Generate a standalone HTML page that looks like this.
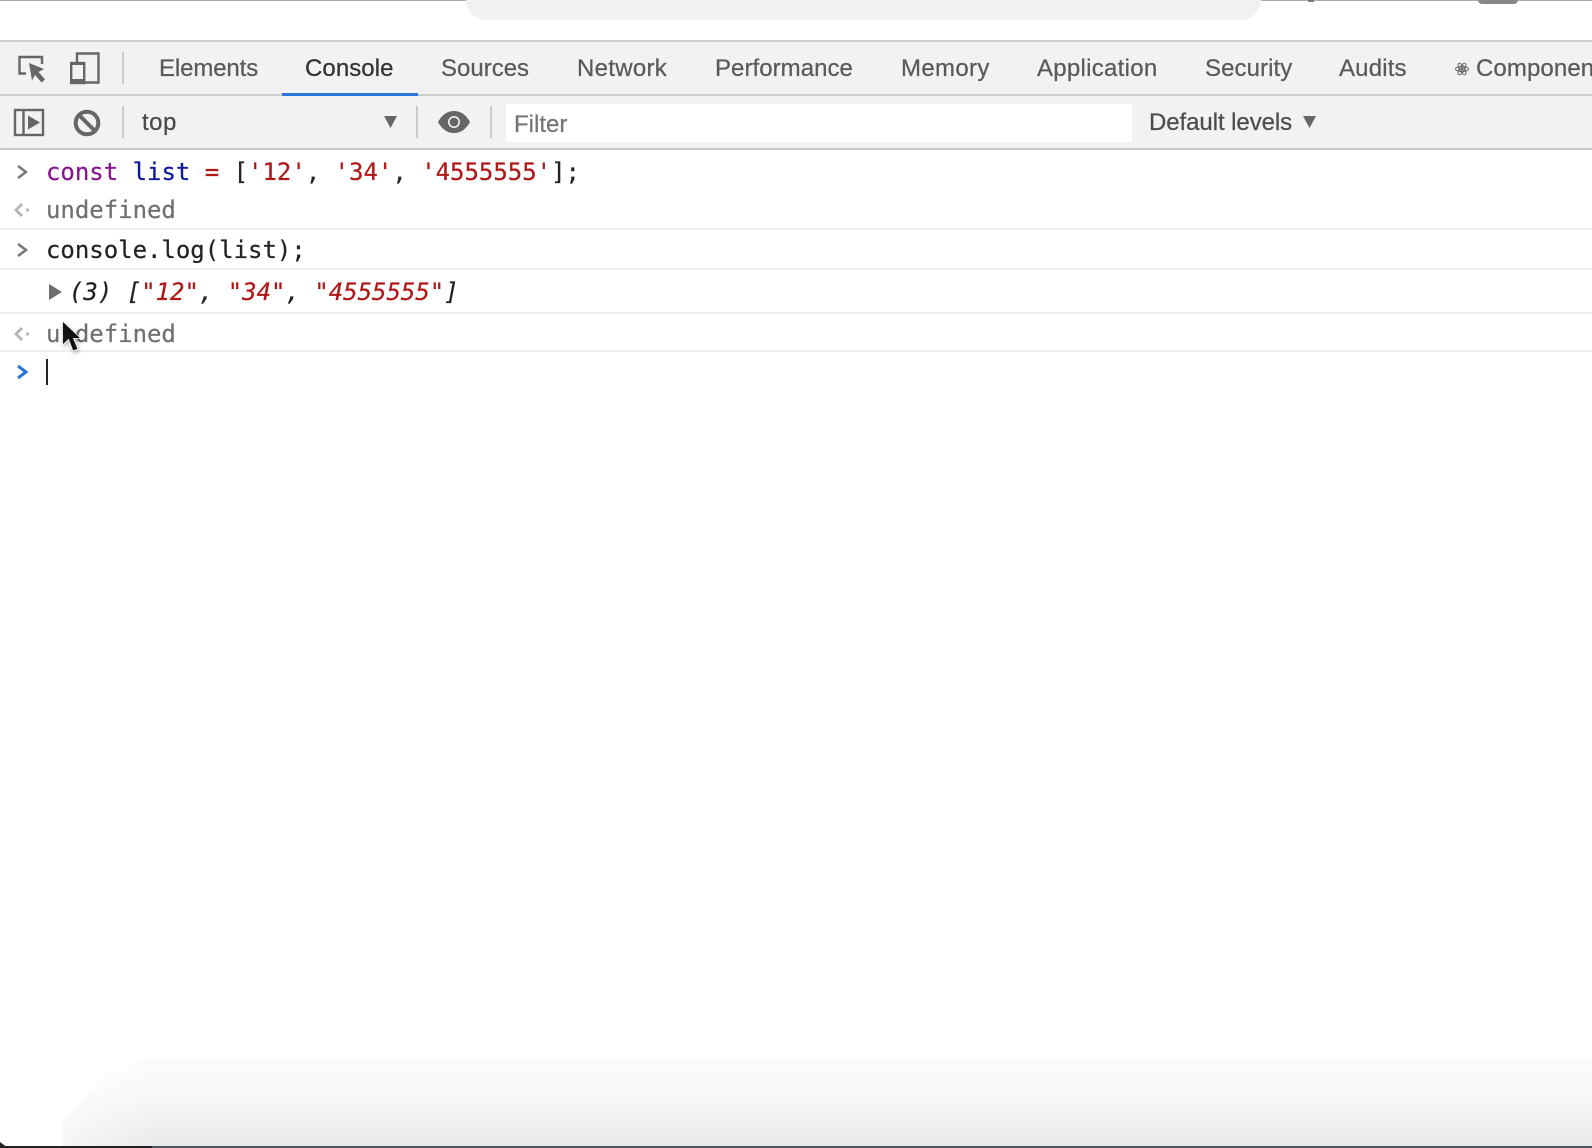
<!DOCTYPE html>
<html><head><meta charset="utf-8"><style>
html,body{margin:0;padding:0;background:#fff}
#p{position:relative;width:1592px;height:1148px;overflow:hidden;background:#fff;font-family:"Liberation Sans",sans-serif}
.a{position:absolute}
.t{position:absolute;top:54px;font-size:24px;line-height:30px;color:#5a5a5a;white-space:nowrap;-webkit-text-stroke:0.25px currentColor}
.m{position:absolute;left:46px;font-family:"DejaVu Sans Mono",monospace;font-size:24px;letter-spacing:-0.02px;line-height:30px;color:#222;white-space:pre;-webkit-text-stroke:0.2px currentColor}
.l{position:absolute;left:0;width:1592px;height:2px;background:#efefef}
.s{color:#b01818}
svg{position:absolute;overflow:visible}
</style></head><body><div id="p">
<div class="a" style="left:0;top:0;width:1592px;height:1px;background:#aaa"></div>
<div class="a" style="left:466px;top:0;width:795px;height:20px;background:#f1f1f1;border-radius:0 0 24px 24px"></div>
<div class="a" style="left:1308px;top:0;width:6px;height:2px;background:#777"></div>
<div class="a" style="left:1478px;top:0;width:40px;height:4px;background:#888;border-radius:0 0 4px 4px"></div>

<div class="a" style="left:0;top:41px;width:1592px;height:109px;background:#f2f2f2"></div>
<div class="a" style="left:0;top:40px;width:1592px;height:2px;background:#ccc"></div>
<div class="a" style="left:0;top:94px;width:1592px;height:2px;background:#ccc"></div>
<div class="a" style="left:0;top:148px;width:1592px;height:2px;background:#ccc"></div>
<div class="a" style="left:282px;top:93px;width:136px;height:3px;background:#2a73d8"></div>

<div class="t" style="left:159px;letter-spacing:-.12px">Elements</div>
<div class="t" style="left:305px;color:#333;letter-spacing:.07px">Console</div>
<div class="t" style="left:441px">Sources</div>
<div class="t" style="left:577px;letter-spacing:.29px">Network</div>
<div class="t" style="left:715px;letter-spacing:.05px">Performance</div>
<div class="t" style="left:901px;letter-spacing:.33px">Memory</div>
<div class="t" style="left:1037px;letter-spacing:.28px">Application</div>
<div class="t" style="left:1205px;letter-spacing:.08px">Security</div>
<div class="t" style="left:1339px;letter-spacing:.17px">Audits</div>
<div class="t" style="left:1476px;letter-spacing:.1px">Components</div>
<svg style="left:1455px;top:61px" width="14" height="16" viewBox="0 0 14 16" fill="none" stroke="#666" stroke-width="1"><ellipse cx="7" cy="8" rx="6.5" ry="2.6"/><ellipse cx="7" cy="8" rx="6.5" ry="2.6" transform="rotate(60 7 8)"/><ellipse cx="7" cy="8" rx="6.5" ry="2.6" transform="rotate(120 7 8)"/><circle cx="7" cy="8" r="1.2" fill="#666"/></svg>

<!-- inspect -->
<svg style="left:18px;top:56px" width="30" height="28" viewBox="0 0 30 28" fill="none"><path d="M8 17.500H1.500V1H24V8" stroke="#666" stroke-width="2.400"/><path d="M11 7L26 13L20.500 16L27 23.500L23.500 26.500L17 19L14 24.500Z" fill="#666"/></svg>
<!-- device -->
<svg style="left:70px;top:52px" width="30" height="32" viewBox="0 0 30 32" fill="none" stroke="#666" stroke-width="2.400"><path d="M7 10V1.500H28.500V30.500H14"/><rect x="1.200" y="11" width="13" height="20" fill="#f2f2f2"/><rect x="1" y="27" width="13" height="4" fill="#666" stroke="none"/><rect x="1" y="10" width="13" height="3" fill="#666" stroke="none"/></svg>
<div class="a" style="left:122px;top:52px;width:2px;height:32px;background:#ccc"></div>

<!-- sidebar -->
<svg style="left:14px;top:109px" width="30" height="27" viewBox="0 0 30 27" fill="none"><rect x="1" y="1" width="28" height="25" stroke="#666" stroke-width="2.400"/><path d="M9.500 1V26" stroke="#666" stroke-width="2.400"/><path d="M14 6.500L26 13.500L14 20.500Z" fill="#666"/></svg>
<!-- clear -->
<svg style="left:73px;top:109px" width="28" height="28" viewBox="0 0 28 28" fill="none" stroke="#666" stroke-width="4"><circle cx="14" cy="14" r="11.300"/><path d="M6 6L22 22"/></svg>
<div class="a" style="left:122px;top:106px;width:2px;height:32px;background:#ccc"></div>
<div class="t" style="left:142px;top:108px;color:#4a4a4a;letter-spacing:.5px">top</div>
<svg style="left:384px;top:116px" width="13" height="12"><path d="M0 0H13L6.500 12Z" fill="#666"/></svg>
<div class="a" style="left:416px;top:106px;width:2px;height:32px;background:#ccc"></div>
<svg style="left:438px;top:110px" width="32" height="24" viewBox="0 0 32 24"><path d="M0 12C5 3 11 1 16 1S27 3 32 12C27 21 21 23 16 23S5 21 0 12Z" fill="#666"/><circle cx="16" cy="12" r="6" fill="#f2f2f2"/><circle cx="16" cy="12" r="4.400" fill="#666"/></svg>
<div class="a" style="left:490px;top:106px;width:2px;height:32px;background:#ccc"></div>
<div class="a" style="left:506px;top:104px;width:626px;height:38px;background:#fff"></div>
<div class="t" style="left:514px;top:110px;color:#757575">Filter</div>
<div class="t" style="left:1149px;top:108px;color:#4d4d4d;letter-spacing:-.07px">Default levels</div>
<svg style="left:1303px;top:116px" width="13" height="12"><path d="M0 0H13L6.500 12Z" fill="#666"/></svg>

<!-- console -->
<svg style="left:16px;top:164px" width="12" height="16" fill="none" stroke="#777" stroke-width="2.500"><path d="M2 2L10 8L2 14"/></svg>
<div class="m" style="top:157px"><span style="color:#881391">const</span> <span style="color:#0d1a9a">list</span> <span style="color:#b01818">=</span> [<span class="s">'12'</span>, <span class="s">'34'</span>, <span class="s">'4555555'</span>];</div>

<svg style="left:14px;top:203px" width="16" height="14" fill="none" stroke="#b5b5b5" stroke-width="2.800"><path d="M8 1L2 7L8 13"/><path d="M12 7H15"/></svg>
<div class="m" style="top:195px;color:#6f6f6f">undefined</div>
<div class="l" style="top:228px"></div>

<svg style="left:16px;top:242px" width="12" height="16" fill="none" stroke="#777" stroke-width="2.500"><path d="M2 2L10 8L2 14"/></svg>
<div class="m" style="top:235px">console.log(list);</div>
<div class="l" style="top:268px"></div>

<svg style="left:49px;top:284px" width="13" height="16"><path d="M0 0L13 8L0 16Z" fill="#6e6e6e"/></svg>
<div class="m" style="left:69px;top:277px;font-style:italic">(3) [<span class="s">"12"</span>, <span class="s">"34"</span>, <span class="s">"4555555"</span>]</div>
<div class="l" style="top:312px"></div>

<svg style="left:14px;top:327px" width="16" height="14" fill="none" stroke="#b5b5b5" stroke-width="2.800"><path d="M8 1L2 7L8 13"/><path d="M12 7H15"/></svg>
<div class="m" style="top:319px;color:#6f6f6f">undefined</div>
<div class="l" style="top:350px"></div>

<svg style="left:16px;top:364px" width="12" height="16" fill="none" stroke="#2a73d8" stroke-width="3"><path d="M2 2L10 8L2 14"/></svg>
<div class="a" style="left:46px;top:359px;width:2px;height:26px;background:#222"></div>

<!-- cursor -->
<svg style="left:62px;top:321px;filter:drop-shadow(1px 2px 2px rgba(0,0,0,.3))" width="20" height="32" viewBox="0 0 20 32"><path d="M0.500 0V24L6.500 18.500L11 30L16 28L11.500 17.500H19Z" fill="#111" stroke="#fff" stroke-width="0.800"/></svg>

<!-- bottom fade -->
<div class="a" style="left:0;top:1058px;width:1592px;height:88px;background:linear-gradient(#fcfcfc,#f8f8f8 40%,#f0f0f0 75%,#e9e9e9);clip-path:polygon(140px 0,100% 0,100% 100%,63px 100%,63px 62px,108px 15px,125px 15px)"></div>
<div class="a" style="left:60px;top:1058px;width:100px;height:88px;background:linear-gradient(90deg,rgba(255,255,255,.6),rgba(255,255,255,0))"></div>
<div class="a" style="left:0;top:1146px;width:152px;height:2px;background:#222"></div>
<div class="a" style="left:152px;top:1146px;width:1440px;height:2px;background:#50535f"></div>
<div class="a" style="left:0;top:1142px;width:8px;height:6px;background:#222;clip-path:polygon(0 0,100% 100%,0 100%)"></div>
</div></body></html>
